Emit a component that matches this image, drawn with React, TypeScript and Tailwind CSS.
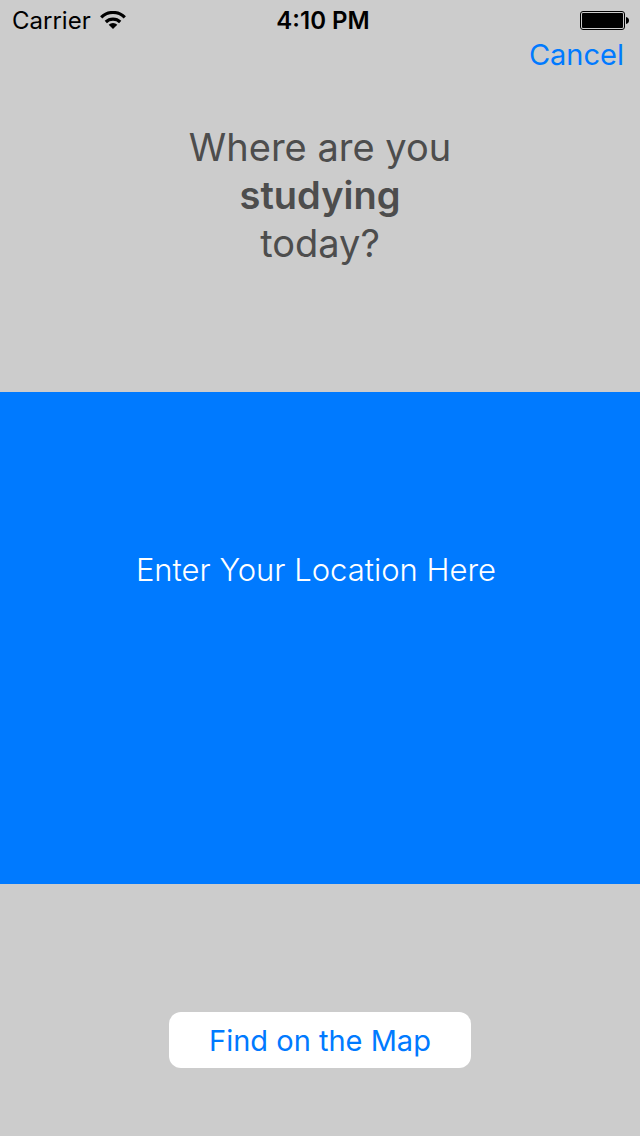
function WifiIcon() {
  return (
    <svg viewBox="0 0 26 18" className="h-[18px] w-[26px]" aria-hidden="true">
      <g fill="none" stroke="#000" strokeWidth="3.200">
        <path d="M1.200 6.300a16.800 16.800 0 0 1 23.600 0" />
        <path d="M5.800 11a10.300 10.300 0 0 1 14.400 0" />
      </g>
      <path d="M13 18l-4.300-4.200a6.200 6.200 0 0 1 8.600 0z" fill="#000" />
    </svg>
  );
}

function BatteryIcon() {
  return (
    <svg viewBox="0 0 54 20" className="h-5 w-[54px]" aria-hidden="true">
      <rect x="0.5" y="1.5" width="44" height="18" rx="2.5" fill="none" stroke="#000" />
      <rect x="2" y="3" width="41" height="15" rx="1" fill="#000" />
      <path d="M46 7c2 .4 3 1.8 3 3.5s-1 3.100-3 3.500z" fill="#000" />
    </svg>
  );
}

function StatusBar() {
  return (
    <div className="grid h-10 grid-cols-[1fr_auto_1fr] items-center pr-[6px] pl-3 text-2xl leading-[38px] text-black">
      <div className="flex items-center gap-[9px]">
        <span className="pt-[2px]">Carrier</span>
        <WifiIcon />
      </div>
      <span className="pt-[2px] font-semibold">4:10 PM</span>
      <div className="flex justify-end">
        <BatteryIcon />
      </div>
    </div>
  );
}

export default function App() {
  return (
    <main className="flex min-h-screen flex-col bg-[#cccccc] font-['Inter','Liberation_Sans',sans-serif]">
      <StatusBar />
      <div className="flex justify-end px-4 pb-[2px]">
        <button type="button" className="text-[29px] leading-[30px] text-[#007aff]">
          Cancel
        </button>
      </div>
      <h1 className="pt-[51px] pb-[125px] text-center text-[38px] leading-12 font-normal text-[#4d4d4d]">
        Where are you
        <br />
        <strong className="font-semibold">studying</strong>
        <br />
        today?
      </h1>
      <section className="flex-1 bg-[#007aff] pt-[147px] pr-10 pb-20 pl-8">
        <input
          type="text"
          aria-label="Location"
          placeholder="Enter Your Location Here"
          className="h-15 w-full bg-transparent text-center text-[31px] font-[350] text-white outline-none placeholder:text-white"
        />
      </section>
      <footer className="flex justify-center pt-32 pb-[68px]">
        <button
          type="button"
          className="h-14 w-[302px] rounded-xl bg-white pt-[2px] text-[29px] leading-[54px] text-[#007aff]"
        >
          Find on the Map
        </button>
      </footer>
    </main>
  );
}
